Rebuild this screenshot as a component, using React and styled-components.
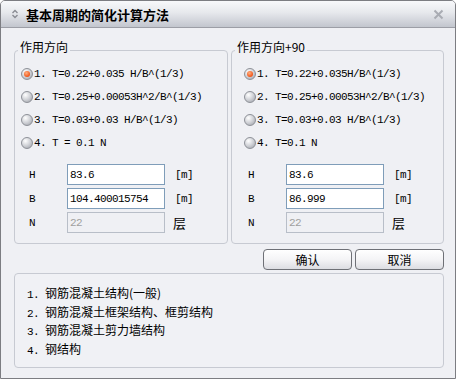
import React from "react";
import styled, { createGlobalStyle } from "styled-components";

const Global = createGlobalStyle`
  body {
    margin: 0;
    background: #ffffff;
    font-family: "Noto Sans CJK SC", "Noto Sans", sans-serif;
    font-size: 12px;
    color: #000;
  }
`;

const formulasA = [
  "1. T=0.22+0.035 H/B^(1/3)",
  "2. T=0.25+0.00053H^2/B^(1/3)",
  "3. T=0.03+0.03 H/B^(1/3)",
  "4. T = 0.1 N",
];

const formulasB = [
  "1. T=0.22+0.035H/B^(1/3)",
  "2. T=0.25+0.00053H^2/B^(1/3)",
  "3. T=0.03+0.03 H/B^(1/3)",
  "4. T=0.1 N",
];

const notes = [
  "钢筋混凝土结构(一般)",
  "钢筋混凝土框架结构、框剪结构",
  "钢筋混凝土剪力墙结构",
  "钢结构",
];

function Radio({ checked }) {
  return (
    <RadioDot checked={checked}>{checked && <RadioMark />}</RadioDot>
  );
}

function Group({ title, formulas, radioInset, fieldInset, b }) {
  return (
    <GroupBox>
      <Legend>{title}</Legend>
      <RadioList inset={radioInset}>
        {formulas.map((f, i) => (
          <RadioRow key={i}>
            <Radio checked={i === 0} />
            <Mono>{f}</Mono>
          </RadioRow>
        ))}
      </RadioList>
      <FieldGrid inset={fieldInset}>
        <Mono>H</Mono>
        <Input value="83.6" />
        <Unit>[m]</Unit>
        <Mono>B</Mono>
        <Input value={b} />
        <Unit>[m]</Unit>
        <Mono>N</Mono>
        <Input value="22" disabled />
        <Unit cjk>层</Unit>
      </FieldGrid>
    </GroupBox>
  );
}

export default function App() {
  return (
    <>
      <Global />
      <Window>
        <TitleBar>
          <svg width="8" height="10" viewBox="0 0 8 10">
            <path d="M1.5 4 L4 1.5 L6.5 4 M1.5 6 L4 8.5 L6.5 6" fill="none" stroke="#8a8c94" strokeWidth="1.4" />
          </svg>
          <Title>基本周期的简化计算方法</Title>
          <Close>
            <svg width="11" height="11" viewBox="0 0 11 11">
              <path d="M1.5 1.5 L9.5 9.5 M9.5 1.5 L1.5 9.5" stroke="#a9acb3" strokeWidth="2" />
            </svg>
          </Close>
        </TitleBar>
        <Body>
          <Groups>
            <Group title="作用方向" formulas={formulasA} radioInset={6} fieldInset={14} b="104.400015754" />
            <Group title="作用方向+90" formulas={formulasB} radioInset={12} fieldInset={16} b="86.999" />
          </Groups>
          <Buttons>
            <Button>确认</Button>
            <Button>取消</Button>
          </Buttons>
          <NoteBox>
            {notes.map((n, i) => (
              <NoteRow key={i}>
                <Mono>{i + 1}. </Mono>
                {n}
              </NoteRow>
            ))}
          </NoteBox>
        </Body>
      </Window>
    </>
  );
}

const Window = styled.div`
  width: 456px;
  height: 379px;
  box-sizing: border-box;
  border: 1px solid #7c7d82;
  border-radius: 5px 5px 0 0;
  background: #eff0f4;
  overflow: hidden;
  display: flex;
  flex-direction: column;
`;

const TitleBar = styled.div`
  height: 26px;
  flex: none;
  display: flex;
  align-items: center;
  padding-left: 10px;
  background: linear-gradient(#f8f9fb, #e6e8ec 45%, #cfd2d9 80%, #c2c6ce);
  border-bottom: 1px solid #9c9ea6;
`;

const Title = styled.div`
  margin-left: 7px;
  font-size: 13px;
  font-weight: bold;
`;

const Close = styled.div`
  margin-left: auto;
  margin-right: 11px;
  display: flex;
`;

const Body = styled.div`
  padding: 0 11px 0 13px;
  display: flex;
  flex-direction: column;
`;

const Groups = styled.div`
  margin-top: 22px;
  display: flex;
  gap: 3px;
`;

const GroupBox = styled.div`
  position: relative;
  width: 214px;
  box-sizing: border-box;
  border: 1px solid #c7cad2;
  border-radius: 4px;
  padding: 11px 0 10px;
  & + & {
    width: 213px;
  }
`;

const Legend = styled.span`
  position: absolute;
  top: -11px;
  left: 3px;
  padding: 0 2px;
  line-height: 14px;
  background: #eff0f4;
`;

const RadioList = styled.div`
  padding-left: ${(p) => p.inset}px;
`;

const RadioRow = styled.div`
  height: 23px;
  display: flex;
  align-items: center;
  gap: 1px;
`;

const RadioDot = styled.span`
  width: 12px;
  height: 12px;
  box-sizing: border-box;
  border-radius: 50%;
  border: 1px solid #8e9198;
  background: radial-gradient(circle at 35% 30%, #ffffff, #cfd1d6 50%, #9a9da5);
  display: flex;
  align-items: center;
  justify-content: center;
`;

const RadioMark = styled.span`
  width: 6px;
  height: 6px;
  border-radius: 50%;
  background: radial-gradient(circle at 40% 35%, #ffb080, #f04e10 75%);
`;

const Mono = styled.span`
  font-family: "Liberation Mono", monospace;
  font-size: 11px;
  letter-spacing: -0.6px;
  white-space: pre;
`;

const FieldGrid = styled.div`
  margin-top: 10px;
  padding-left: ${(p) => p.inset}px;
  display: grid;
  grid-template-columns: 38px 98px auto;
  row-gap: 3px;
  align-items: center;
`;

const Input = styled.input.attrs({ readOnly: true })`
  width: 98px;
  height: 21px;
  box-sizing: border-box;
  border: 1px solid ${(p) => (p.disabled ? "#b8bec8" : "#7f9db9")};
  background: ${(p) => (p.disabled ? "#eff0f4" : "#ffffff")};
  color: ${(p) => (p.disabled ? "#a0a0a0" : "#000")};
  padding: 0 2px;
  font-family: "Liberation Mono", monospace;
  font-size: 11px;
  letter-spacing: -0.6px;
  outline: none;
`;

const Unit = styled.span`
  margin-left: ${(p) => (p.cjk ? 8 : 10)}px;
  font-family: ${(p) => (p.cjk ? '"Noto Sans CJK SC", sans-serif' : '"Liberation Mono", monospace')};
  font-size: ${(p) => (p.cjk ? 13 : 11)}px;
  letter-spacing: ${(p) => (p.cjk ? 0 : -0.6)}px;
`;

const Buttons = styled.div`
  margin-top: 5px;
  display: flex;
  justify-content: flex-end;
  gap: 3px;
`;

const Button = styled.button`
  width: 89px;
  height: 21px;
  padding: 0;
  border: 1px solid #6e7076;
  border-radius: 4px;
  background: linear-gradient(#ffffff, #f4f4f6 50%, #dcdde2);
  font-family: "Noto Sans CJK SC", sans-serif;
  font-size: 12px;
  color: #000;
`;

const NoteBox = styled.div`
  margin-top: 3px;
  height: 95px;
  box-sizing: border-box;
  border: 1px solid #c7cad2;
  border-radius: 4px;
  padding: 10px 0 0 12px;
  background: #f0f1f5;
`;

const NoteRow = styled.div`
  height: 18.5px;
  line-height: 18.5px;
  font-size: 12px;
`;
